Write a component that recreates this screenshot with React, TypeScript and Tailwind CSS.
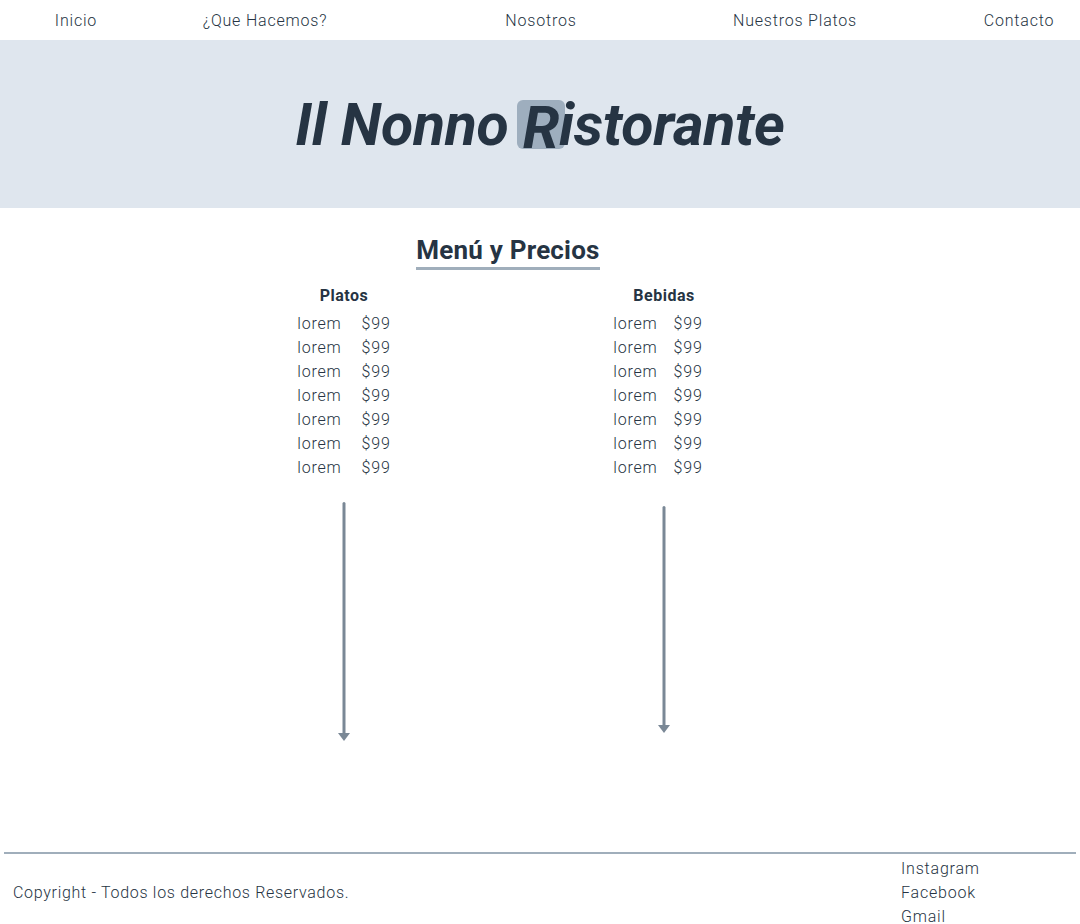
import React from 'react';

const navItems = [
  { label: 'Inicio', ml: 'ml-[11px]' },
  { label: '¿Que Hacemos?', ml: 'ml-[59px]' },
  { label: 'Nosotros', ml: 'ml-[146px]' },
  { label: 'Nuestros Platos', ml: 'ml-[124px]' },
  { label: 'Contacto', ml: 'ml-[94px]' },
];

const rows = Array.from({ length: 7 });

function Arrow({ height }: { height: number }) {
  return (
    <svg width="14" height={height} viewBox={`0 0 14 ${height}`} className="block">
      <line x1="7" y1="1.5" x2="7" y2={height - 8} stroke="#7a8896" strokeWidth="3" strokeLinecap="round" />
      <polygon points={`1,${height - 9} 13,${height - 9} 7,${height - 1}`} fill="#7a8896" />
    </svg>
  );
}

export default function App() {
  return (
    <div className="min-h-screen bg-white text-[#263443]" style={{ fontFamily: 'Roboto, "Liberation Sans", sans-serif' }}>
      {/* nav */}
      <nav className="h-10 flex items-center pt-[2px]">
        {navItems.map((item) => (
          <a key={item.label} href="#" className={`${item.ml} w-[130px] shrink-0 text-center text-base font-light tracking-[0.8px]`}>
            {item.label}
          </a>
        ))}
      </nav>

      {/* hero */}
      <header className="h-[168px] bg-[#dfe6ee] flex items-center justify-center">
        <h1 className="text-[59px] font-bold italic tracking-[-0.3px] leading-none">
          Il Nonno{' '}
          <span className="inline-block bg-[#9eaebe] rounded-md h-[49px] leading-[56px] px-[6px] -mx-[6px] align-[-3px]">R</span>
          istorante
        </h1>
      </header>

      {/* menu */}
      <main className="h-[644px] pt-[26px]">
        <div className="w-[640px] ml-[188px]">
          <div className="flex justify-center">
            <h2 className="text-[26px] font-bold leading-tight tracking-[0.2px] border-b-[3px] border-[#a0aebb]">Menú y Precios</h2>
          </div>
          <div className="flex mt-[14px]">
            <div className="w-[320px] flex flex-col items-center pr-[8px]">
              <h3 className="text-base font-bold tracking-[0.5px]">Platos</h3>
              <div className="mt-[4px]">
                {rows.map((_, i) => (
                  <div key={i} className="flex gap-[20px] text-base font-light leading-6 tracking-[0.8px]">
                    <span>lorem</span>
                    <span>$99</span>
                  </div>
                ))}
              </div>
              <div className="mt-[22px]">
                <Arrow height={240} />
              </div>
            </div>
            <div className="w-[320px] flex flex-col items-center pr-[8px]">
              <h3 className="text-base font-bold tracking-[0.5px]">Bebidas</h3>
              <div className="mt-[4px] -ml-[12px]">
                {rows.map((_, i) => (
                  <div key={i} className="flex gap-[16px] text-base font-light leading-6 tracking-[0.8px]">
                    <span>lorem</span>
                    <span>$99</span>
                  </div>
                ))}
              </div>
              <div className="mt-[26px]">
                <Arrow height={228} />
              </div>
            </div>
          </div>
        </div>
      </main>

      {/* footer */}
      <footer className="mx-1 border-t-2 border-[#a0aebb] flex items-start justify-between text-base font-light">
        <p className="pl-[9px] pt-[27px] tracking-[0.7px]">Copyright - Todos los derechos Reservados.</p>
        <ul className="w-[175px] pt-[3px] leading-6 tracking-[0.8px]">
          <li>Instagram</li>
          <li>Facebook</li>
          <li>Gmail</li>
        </ul>
      </footer>
    </div>
  );
}
